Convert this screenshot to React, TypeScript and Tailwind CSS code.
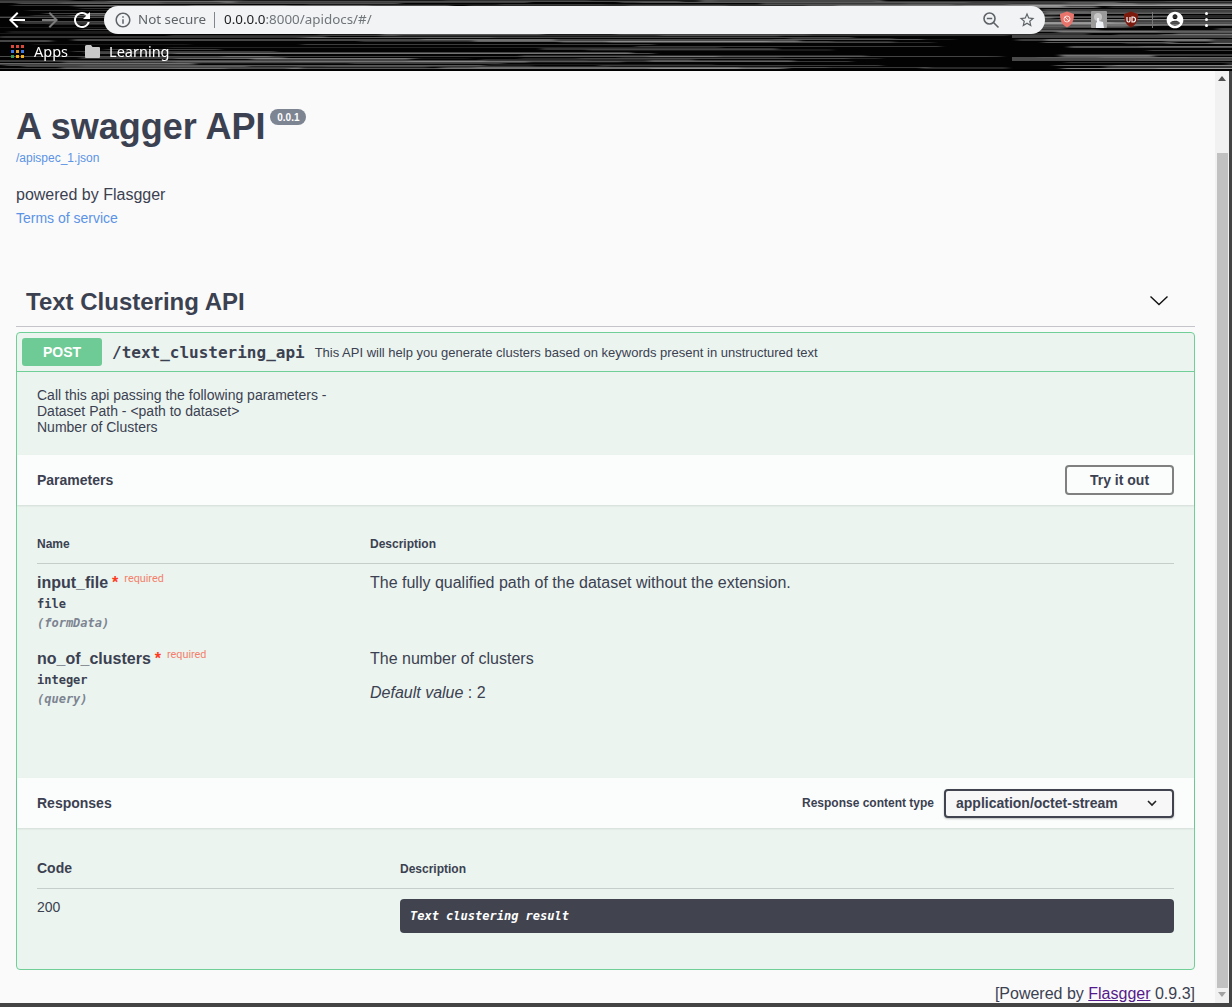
import React from 'react';

const sans = "font-['Liberation_Sans',Arial,sans-serif]";
const mono = "font-['DejaVu_Sans_Mono',monospace]";

// blurred grey streaks of the desktop wallpaper behind the browser toolbar
function streaks() {
  const out: { x: number; y: number; w: number; h: number; o: number }[] = [];
  let seed = 17;
  const rnd = () => {
    seed = (seed * 16807) % 2147483647;
    return seed / 2147483647;
  };
  for (let i = 0; i < 300; i++) {
    const y = Math.floor(rnd() * 71);
    const x = Math.floor(rnd() * 1332) - 100;
    const w = 80 + Math.floor(rnd() * 500);
    const h = rnd() > 0.6 ? 2 : 1;
    const o = 0.1 + rnd() * 0.32;
    if (y < 35 || x < 1012) {
      if (x + w > 1012 && y >= 35) continue;
      out.push({ x, y, w, h, o });
    } else {
      out.push({ x, y, w, h, o: o + 0.1 });
    }
  }
  return out;
}

function Wallpaper() {
  return (
    <svg className="absolute inset-0" width="1232" height="71" viewBox="0 0 1232 71">
      <rect width="1232" height="71" fill="#030303" />
      <defs>
        <filter id="b" x="-5%" y="-100%" width="110%" height="300%">
          <feGaussianBlur stdDeviation="3 0.5" />
        </filter>
      </defs>
      <g filter="url(#b)">
        {streaks().map((s, i) => (
          <rect key={i} x={s.x} y={s.y} width={s.w} height={s.h} fill="#b8b8b8" opacity={s.o} />
        ))}
      </g>
      <rect x="1012" y="57" width="220" height="4" fill="#6a6a6a" opacity="0.7" />
      <rect x="1012" y="35" width="220" height="3" fill="#555" opacity="0.8" />
      <rect x="0" y="69" width="1232" height="2" fill="#000" />
    </svg>
  );
}

function Ico({ d, color, size = 24 }: { d: string; color: string; size?: number }) {
  return (
    <svg width={size} height={size} viewBox="0 0 24 24" fill={color}>
      <path d={d} />
    </svg>
  );
}

function ChromeBar() {
  return (
    <div className="relative h-[71px] shrink-0 overflow-hidden">
      <Wallpaper />
      <div className="relative flex h-[38px] items-center pt-[1px]">
        <div className="ml-[5px] flex w-[99px] items-center">
          <Ico color="#ffffff" d="M20 11H7.83l5.59-5.59L12 4l-8 8 8 8 1.41-1.41L7.83 13H20v-2z" />
          <div className="ml-[9px]">
            <Ico color="#7c7c7c" d="M12 4l-1.41 1.41L16.17 11H4v2h12.17l-5.58 5.59L12 20l8-8z" />
          </div>
          <div className="ml-[8px]">
            <Ico color="#ffffff" d="M17.65 6.35A7.958 7.958 0 0 0 12 4c-4.42 0-7.99 3.58-7.99 8s3.57 8 7.99 8c3.73 0 6.84-2.55 7.73-6h-2.08A5.99 5.99 0 0 1 12 18c-3.31 0-6-2.69-6-6s2.69-6 6-6c1.66 0 3.14.69 4.22 1.78L13 11h7V4l-2.35 2.35z" />
          </div>
        </div>
        <div className="flex h-[28px] w-[941px] items-center rounded-full bg-[#f1f3f4] pl-[10px] pr-[9px]">
          <Ico size={18} color="#5f6368" d="M11 7h2v2h-2zm0 4h2v6h-2zm1-9C6.48 2 2 6.48 2 12s4.48 10 10 10 10-4.48 10-10S17.52 2 12 2zm0 18c-4.41 0-8-3.59-8-8s3.59-8 8-8 8 3.59 8 8-3.59 8-8 8z" />
          <span className="ml-[6px] font-['Noto_Sans',sans-serif] text-[13.4px] text-[#5f6368]">Not secure</span>
          <div className="ml-[8px] h-[16px] w-px bg-[#80868b]" />
          <span className="ml-[9px] font-['Noto_Sans',sans-serif] text-[13.4px] text-[#202124]">
            0.0.0.0<span className="text-[#70757a]">:8000/apidocs/#/</span>
          </span>
          <div className="ml-auto flex items-center gap-[18px]">
            <svg width="18" height="18" viewBox="0 0 18 18" fill="none" stroke="#5f6368" strokeWidth="1.6">
              <circle cx="7.5" cy="7.5" r="5.5" />
              <path d="M4.8 7.5h5.4M11.5 11.5l5 5" />
            </svg>
            <svg width="18" height="18" viewBox="0 0 24 24" fill="#5f6368">
              <path d="M22 9.24l-7.19-.62L12 2 9.19 8.63 2 9.24l5.46 4.73L5.82 21 12 17.27 18.18 21l-1.63-7.03L22 9.24zM12 15.4l-3.76 2.27 1-4.28-3.32-2.88 4.38-.38L12 6.1l1.71 4.04 4.38.38-3.32 2.88 1 4.28L12 15.4z" />
            </svg>
          </div>
        </div>
        <div className="ml-[14px] flex items-center">
          <svg width="16" height="17" viewBox="0 0 16 17">
            <path d="M8 .5l7 2.5c0 6-1.5 10.500-7 13.500C2.500 13.500 1 9 1 3z" fill="#e8746c" />
            <circle cx="8" cy="8" r="3" fill="none" stroke="#fbdcd9" strokeWidth="1" />
            <path d="M6 6l4 4" stroke="#fbdcd9" strokeWidth="1" />
          </svg>
          <svg className="ml-[16px]" width="16" height="17" viewBox="0 0 16 17">
            <rect width="16" height="17" rx="1" fill="#9a9a9a" />
            <circle cx="7" cy="6" r="4" fill="#c6c6c6" />
            <path d="M5 17v-5l1-1V7h2v3l4 1 1 6z" fill="#eef2f7" />
          </svg>
          <svg className="ml-[16px]" width="16" height="17" viewBox="0 0 16 17">
            <path d="M8 .5l7 2.500c0 6-1.500 10.500-7 13.500C2.500 13.500 1 9 1 3z" fill="#7d1a0e" />
            <path d="M4 6v3.500a1.500 1.500 0 0 0 3 0V6M9 6v5h1a2.500 2.500 0 0 0 0-5z" fill="none" stroke="#fff" strokeWidth="1.200" />
          </svg>
          <div className="ml-[13px] h-[16px] w-px bg-[#777]" />
          <div className="ml-[12px]">
            <Ico color="#ffffff" size={20} d="M12 2C6.480 2 2 6.480 2 12s4.480 10 10 10 10-4.480 10-10S17.520 2 12 2zm0 3c1.660 0 3 1.340 3 3s-1.340 3-3 3-3-1.340-3-3 1.340-3 3-3zm0 14.200a7.200 7.200 0 0 1-6-3.220c.030-1.990 4-3.080 6-3.080 1.990 0 5.970 1.090 6 3.080a7.200 7.200 0 0 1-6 3.220z" />
          </div>
          <div className="ml-[20px] flex flex-col gap-[3px]">
            <div className="size-[3px] rounded-full bg-white" />
            <div className="size-[3px] rounded-full bg-white" />
            <div className="size-[3px] rounded-full bg-white" />
          </div>
        </div>
      </div>
      <div className="relative flex h-[27px] items-center pl-[11px] font-['Noto_Sans',sans-serif] text-[14.5px] text-white">
        <svg width="13" height="13" viewBox="0 0 13 13">
          {[0, 1, 2].map((r) =>
            [0, 1, 2].map((c) => (
              <rect
                key={`${r}${c}`}
                x={c * 5}
                y={r * 5}
                width="3"
                height="3"
                fill={[['#d8483b', '#d8483b', '#d8483b'], ['#3b78e7', '#e0a030', '#3b78e7'], ['#3a9a52', '#f2b01e', '#f2b01e']][r][c]}
              />
            ))
          )}
        </svg>
        <span className="ml-[10px]">Apps</span>
        <svg className="ml-[17px]" width="15" height="13" viewBox="0 0 15 13" fill="#c9c9c9">
          <path d="M1.500 0h4.500l1.500 2H14a1 1 0 0 1 1 1v9a1 1 0 0 1-1 1H1a1 1 0 0 1-1-1V1.500A1.500 1.500 0 0 1 1.500 0z" />
        </svg>
        <span className="ml-[9px]">Learning</span>
      </div>
    </div>
  );
}

function Scrollbar() {
  return (
    <div className="flex w-[14px] shrink-0 flex-col items-center bg-[#f1f1f1]">
      <div className="mt-[5px] h-0 w-0 border-x-[4px] border-b-[5px] border-x-transparent border-b-[#505050]" />
      <div className="mt-[72px] h-[835px] w-[11px] bg-[#c1c1c1]" />
      <div className="mt-[4px] h-0 w-0 border-x-[4px] border-t-[5px] border-x-transparent border-t-[#a3a3a3]" />
    </div>
  );
}

function ParamName({ name, type, where }: { name: string; type: string; where: string }) {
  return (
    <div className="w-[333px]">
      <div className="flex h-[20px] items-start text-[16px] font-bold leading-[20px] text-[#3b4151]">
        {name}
        <span className="ml-[4px] text-[#ff3b1f]">*</span>
        <span className="ml-[6px] mt-[-4px] font-['Roboto',sans-serif] text-[10.8px] font-normal text-[#f4806b]">required</span>
      </div>
      <div className={`${mono} mt-[1px] h-[20px] text-[12px] font-bold leading-[20px] text-[#3b4151]`}>{type}</div>
      <div className={`${mono} mt-[-1px] h-[20px] text-[12px] font-bold italic leading-[20px] text-[#7d8492]`}>{where}</div>
    </div>
  );
}

function SectionHeader({ children }: { children: React.ReactNode }) {
  return (
    <div className="flex h-[50px] items-center justify-between bg-[#fbfdfc] pl-[20px] pr-[20px] shadow-[0_1px_2px_rgba(0,0,0,0.1)]">
      {children}
    </div>
  );
}

export default function App() {
  return (
    <div className={`${sans} flex h-[1007px] w-[1232px] flex-col overflow-hidden bg-[#444]`}>
      <ChromeBar />
      <div className="flex h-[932px] w-[1229px]">
        <div className="w-[1215px] bg-[#fafafa] pl-[16px] pr-[20px] text-[#3b4151]">
          <div className="mt-[33px] flex h-[46px] items-start">
            <h1 className="text-[36px] font-bold leading-[46px]">A swagger API</h1>
            <span className="ml-[5px] mt-[5px] flex h-[16px] w-[36px] items-center justify-center rounded-full bg-[#7d8492] text-[10px] font-bold text-white">
              0.0.1
            </span>
          </div>
          <div className="h-[16px] text-[12px] leading-[16px] text-[#5b93e6]">/apispec_1.json</div>
          <p className="mt-[18px] text-[16px] leading-[22px]">powered by Flasgger</p>
          <div className="mt-[3px] text-[14px] leading-[18px] text-[#5b93e6]">Terms of service</div>

          <div className="mt-[51px] flex h-[49px] items-center justify-between border-b border-[#c4c4ca] pl-[10px] pr-[26px]">
            <h2 className="text-[24px] font-bold leading-[30px]">Text Clustering API</h2>
            <svg className="mb-[2px]" width="20" height="20" viewBox="0 0 20 20" fill="none" stroke="#111" strokeWidth="1.400">
              <path d="M1.500 5.500L10 13.500l8.500-8" />
            </svg>
          </div>

          <div className="mt-[5px] h-[638px] rounded-[4px] border border-[#6fcf97] bg-[#ebf4ef]">
            <div className="flex h-[39px] items-center border-b border-[#6fcf97] pl-[5px]">
              <div className="flex h-[28px] w-[80px] items-center justify-center rounded-[3px] bg-[#6fcb96] text-[14px] font-bold text-white">
                POST
              </div>
              <span className={`${mono} ml-[10px] mt-[2px] text-[16px] font-bold text-[#3b4151]`}>/text_clustering_api</span>
              <span className="ml-[10px] mt-[2px] text-[13px] text-[#3b4151]">This API will help you generate clusters based on keywords present in unstructured text</span>
            </div>

            <div className="h-[83px] pl-[20px] pt-[15px] text-[14px] leading-[16px]">
              <div>Call this api passing the following parameters -</div>
              <div>Dataset Path - &lt;path to dataset&gt;</div>
              <div>Number of Clusters</div>
            </div>

            <SectionHeader>
              <span className="text-[14px] font-bold">Parameters</span>
              <button className="h-[30px] w-[109px] rounded-[4px] border-2 border-[#808080] text-[14px] font-bold">Try it out</button>
            </SectionHeader>

            <div className="h-[252px] px-[20px]">
              <div className="mt-[21px] flex h-[38px] items-center border-b border-[#c6cecb] pb-[2px] text-[12px] font-bold">
                <span className="w-[333px]">Name</span>
                <span>Description</span>
              </div>
              <div className="mt-[9px] flex h-[76px] items-start">
                <ParamName name="input_file" type="file" where="(formData)" />
                <p className="text-[16px] leading-[20px]">The fully qualified path of the dataset without the extension.</p>
              </div>
              <div className="flex items-start">
                <ParamName name="no_of_clusters" type="integer" where="(query)" />
                <div className="text-[16px] leading-[20px]">
                  <p>The number of clusters</p>
                  <p className="mt-[14px]">
                    <i>Default value</i> : 2
                  </p>
                </div>
              </div>
            </div>

            <SectionHeader>
              <span className="text-[14px] font-bold">Responses</span>
              <div className="flex items-center">
                <span className="text-[12px] font-bold">Response content type</span>
                <div className="ml-[10px] flex h-[29px] w-[230px] items-center justify-between rounded-[4px] border-2 border-[#41444e] bg-[#f7f7f7] pl-[10px] pr-[14px] text-[14px] font-bold shadow-[0_1px_2px_rgba(0,0,0,0.25)]">
                  application/octet-stream
                  <svg width="12" height="12" viewBox="0 0 12 12" fill="none" stroke="#222" strokeWidth="1.600">
                    <path d="M2 4l4 4 4-4" />
                  </svg>
                </div>
              </div>
            </SectionHeader>

            <div className="px-[20px]">
              <div className="mt-[21px] flex h-[40px] items-center border-b border-[#c6cecb] font-bold">
                <span className="w-[363px] text-[14px]">Code</span>
                <span className="text-[12px]">Description</span>
              </div>
              <div className="mt-[10px] flex items-start">
                <span className="w-[363px] text-[14px] leading-[16px]">200</span>
                <div className={`${mono} flex h-[34px] flex-1 items-center rounded-[4px] bg-[#41444e] pl-[10px] text-[12px] font-bold italic text-white`}>
                  Text clustering result
                </div>
              </div>
            </div>
          </div>

          <div className="mt-[14px] text-right text-[16px] leading-[20px]">
            [Powered by <a className="text-[#551a8b] underline">Flasgger</a> 0.9.3]
          </div>
        </div>
        <Scrollbar />
      </div>
    </div>
  );
}
